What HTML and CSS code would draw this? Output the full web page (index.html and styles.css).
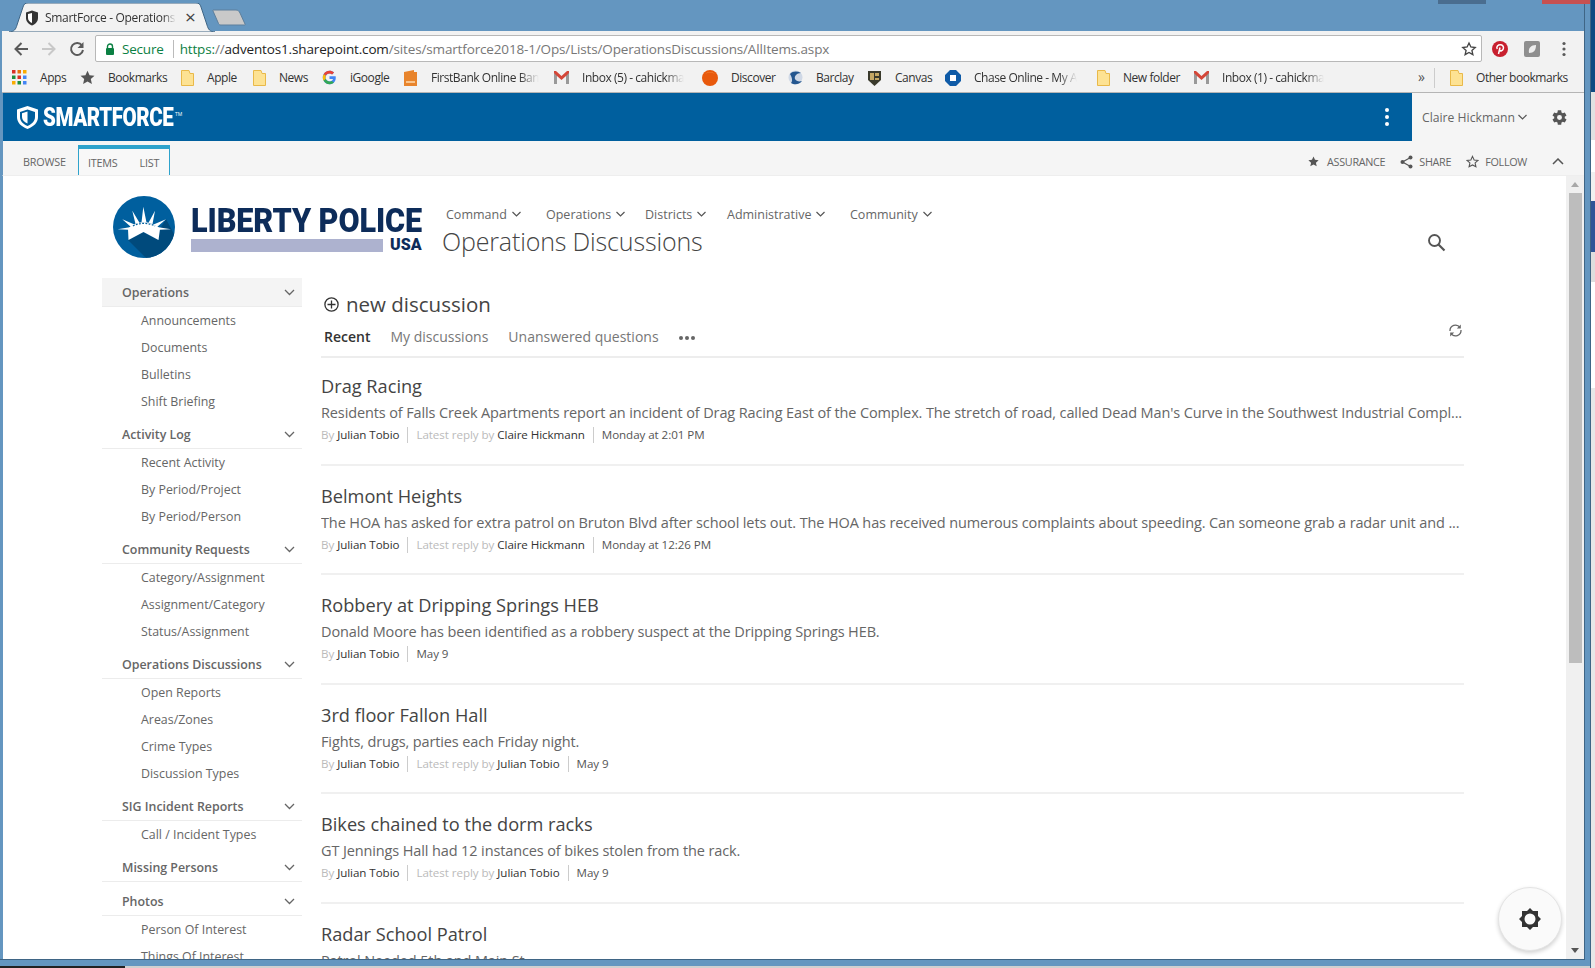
FILE: index.html
```html
<!DOCTYPE html>
<html lang="en">
<head>
<meta charset="utf-8">
<title>SmartForce - Operations Discussions</title>
<link rel="stylesheet" href="styles.css">
</head>
<body>
<div class="desktop">
  <div class="win-btn win-btn-min"></div>
  <div class="win-btn win-btn-close"></div>
  <div class="behind-right"></div>
  <div class="behind-bottom"></div>
  <div class="window">
    <div class="tabstrip">
      <div class="tab">
        <svg class="tab-shape" width="206" height="29" viewBox="0 0 206 29"><path d="M0 29C5 29 7 26 8 22L14 4C15 1 16 0 19 0H187C190 0 191 1 192 4L198 22C199 26 201 29 206 29Z" fill="#f2f2f2" stroke="#3f6585" stroke-width="1"/></svg>
        <svg class="tab-icon" width="14" height="16" viewBox="0 0 14 16"><path d="M7 .5 13 2.500V8c0 3.500-2.500 6-6 7.500C3.500 14 1 11.500 1 8V2.500Z" fill="#333"/><path d="M7 3v10C4.800 12 3 10.500 3 8V4Z" fill="#fff"/></svg>
        <span class="tab-title">SmartForce - Operations</span>
        <span class="tab-close">×</span>
      </div>
      <svg class="newtab" width="36" height="17" viewBox="0 0 36 17"><path d="M1 1H24C26 1 27 2 28 4L33 15C33.500 16 33 16 32 16H9C7.500 16 7 15.500 6.500 14.500L1 2C.7 1.300.8 1 1 1Z" fill="#c9c9c9" stroke="#5d7f9c"/></svg>
    </div>

    <div class="toolbar">
      <svg class="nav-ico" width="16" height="16" viewBox="0 0 16 16"><path d="M15 8H2.500M8.500 2 2.500 8l6 6" fill="none" stroke="#5a5a5a" stroke-width="2"/></svg>
      <svg class="nav-ico nav-fwd" width="16" height="16" viewBox="0 0 16 16"><path d="M1 8h12.500M7.500 2l6 6-6 6" fill="none" stroke="#c8c8c8" stroke-width="2"/></svg>
      <svg class="nav-ico nav-reload" width="16" height="16" viewBox="0 0 16 16"><path d="M13 4.500A6 6 0 1 0 14 9" fill="none" stroke="#5a5a5a" stroke-width="2"/><path d="M14.500 1v6h-6Z" fill="#5a5a5a"/></svg>
      <div class="omnibox">
        <svg width="10" height="12" viewBox="0 0 10 12"><path d="M2.500 5V3.500a2.500 2.500 0 0 1 5 0V5" fill="none" stroke="#0b8043" stroke-width="1.400"/><rect x="1" y="5" width="8" height="7" rx="1" fill="#0b8043"/></svg>
        <span class="secure">Secure</span>
        <span class="omni-sep"></span>
        <span class="url"><span class="url-https">https:</span>//<span class="url-host">adventos1.sharepoint.com</span>/sites/smartforce2018-1/Ops/Lists/OperationsDiscussions/AllItems.aspx</span>
        <svg class="omni-star" width="16" height="16" viewBox="0 0 24 24"><path d="M12 3l2.800 6 6.500.7-4.900 4.400 1.400 6.400L12 17.200 6.200 20.500l1.400-6.400L2.700 9.700 9.200 9Z" fill="none" stroke="#444" stroke-width="2"/></svg>
      </div>
      <svg class="ext-pin" width="16" height="16" viewBox="0 0 16 16"><circle cx="8" cy="8" r="8" fill="#c8202f"/><path d="M6.500 13 8 6.500M5.200 8C4 5.500 6 3.800 8.300 3.800s3.700 1.700 3 4c-.6 2-2.800 2.800-3.800 1.200" fill="none" stroke="#fff" stroke-width="1.500"/></svg>
      <svg class="ext-box" width="16" height="16" viewBox="0 0 16 16"><rect width="16" height="16" rx="2" fill="#8f8f8f"/><path d="M5 12C4 7 7 4 12 4c0 5-2 8-7 8Z" fill="#eee"/></svg>
      <svg class="ext-menu" width="4" height="16" viewBox="0 0 4 16"><circle cx="2" cy="2.500" r="1.600" fill="#5a5a5a"/><circle cx="2" cy="8" r="1.600" fill="#5a5a5a"/><circle cx="2" cy="13.500" r="1.600" fill="#5a5a5a"/></svg>
    </div>

    <div class="bookmarks">
      <div class="bm"><svg width="15" height="15" viewBox="0 0 15 15"><rect x="0" y="0" width="3.500" height="3.500" fill="#d93025"/><rect x="5.500" y="0" width="3.500" height="3.500" fill="#e8710a"/><rect x="11" y="0" width="3.500" height="3.500" fill="#f9ab00"/><rect x="0" y="5.500" width="3.500" height="3.500" fill="#1e8e3e"/><rect x="5.500" y="5.500" width="3.500" height="3.500" fill="#d93025"/><rect x="11" y="5.500" width="3.500" height="3.500" fill="#4285f4"/><rect x="0" y="11" width="3.500" height="3.500" fill="#f9ab00"/><rect x="5.500" y="11" width="3.500" height="3.500" fill="#1e8e3e"/><rect x="11" y="11" width="3.500" height="3.500" fill="#4285f4"/></svg><span>Apps</span></div>
      <div class="bm"><svg width="15" height="15" viewBox="0 0 24 24"><path d="M12 1l3.300 7.300 7.900.9-5.900 5.300 1.700 7.800L12 18.300 5 22.300l1.700-7.800L.8 9.200l7.900-.9Z" fill="#555"/></svg><span>Bookmarks</span></div>
      <div class="bm"><svg class="folder" width="13" height="16" viewBox="0 0 13 16"><path d="M.5.500H8l1 3h3.500v12H.5Z" fill="#fde293" stroke="#e9b949"/></svg><span>Apple</span></div>
      <div class="bm"><svg class="folder" width="13" height="16" viewBox="0 0 13 16"><path d="M.5.500H8l1 3h3.500v12H.5Z" fill="#fde293" stroke="#e9b949"/></svg><span>News</span></div>
      <div class="bm"><svg width="15" height="15" viewBox="0 0 48 48"><path d="M43.600 20H24v8.500h11.300C33.700 33.400 29.300 36.500 24 36.500 17.100 36.500 11.500 30.900 11.500 24S17.100 11.500 24 11.500c3.100 0 6 1.200 8.200 3l6.300-6.300C34.500 4.700 29.500 2.500 24 2.500 12.100 2.500 2.500 12.100 2.500 24S12.100 45.500 24 45.500c11.900 0 20-8.400 20-20 0-2-.1-3.700-.4-5.500Z" fill="#4285f4"/><path d="M5.300 13.500l7 5.100C14.100 14.400 18.700 11.500 24 11.500c3.100 0 6 1.200 8.200 3l6.300-6.300C34.500 4.700 29.500 2.500 24 2.500 15.800 2.500 8.800 7 5.300 13.500Z" fill="#ea4335"/><path d="M5.300 13.500C3.500 16.600 2.500 20.200 2.500 24c0 3.700 1 7.300 2.700 10.300l7-5.400c-.5-1.500-.7-3.100-.7-4.900 0-1.900.3-3.700.8-5.400Z" fill="#fbbc05"/><path d="M24 45.500c5.400 0 10.300-1.900 14-5.200l-6.800-5.300c-2 1.300-4.500 2-7.200 1.500-5.300 0-9.800-3.400-11.700-8.100l-7 5.400C8.700 40.800 15.800 45.500 24 45.500Z" fill="#34a853"/></svg><span>iGoogle</span></div>
      <div class="bm"><svg width="15" height="16" viewBox="0 0 15 16"><path d="M1 2 11 0v2h3v14H1Z" fill="#e8842c"/><rect x="3" y="11" width="9" height="2" fill="#f9c58d"/></svg><span class="fade">FirstBank Online Ban</span></div>
      <div class="bm"><svg width="15" height="13" viewBox="0 0 15 13"><path d="M0 13V0h2l5.500 5L13 0h2v13h-3V5L7.500 9 3 5v8Z" fill="#d44638"/><path d="M3 13V5L0 2v11ZM12 13V5l3-3v11Z" fill="#999"/></svg><span class="fade">Inbox (5) - cahickma</span></div>
      <div class="bm"><svg width="16" height="16" viewBox="0 0 16 16"><circle cx="8" cy="8" r="8" fill="#e8590c"/><path d="M3 4a7 7 0 0 1 10 0A9 9 0 0 0 3 4Z" fill="#f6a95c"/></svg><span>Discover</span></div>
      <div class="bm"><svg width="15" height="15" viewBox="0 0 15 15"><circle cx="7.500" cy="7.500" r="7" fill="#cfd8e6"/><path d="M2 4C5 1 9 1 13 3 9 3 6 6 7 9c1 2 4 3 7 2-3 4-8 4-11 2C5 11 4 7 2 4Z" fill="#23568f"/></svg><span>Barclay</span></div>
      <div class="bm"><svg width="15" height="16" viewBox="0 0 15 16"><path d="M1 1h13v9l-6.500 6L1 10Z" fill="#3a3a2c"/><path d="M3 3h4v7H3ZM8 3h4v3H8ZM8 8h4v2H8Z" fill="#c5a864"/></svg><span>Canvas</span></div>
      <div class="bm"><svg width="16" height="16" viewBox="0 0 16 16"><path d="M5 0h6l5 5H5ZM16 5v6l-5 5V5ZM11 16H5l-5-5h11ZM0 11V5l5-5v11Z" fill="#0f5ba7"/><rect x="5" y="5" width="6" height="6" fill="#fff"/></svg><span class="fade">Chase Online - My A</span></div>
      <div class="bm"><svg class="folder" width="13" height="16" viewBox="0 0 13 16"><path d="M.5.500H8l1 3h3.500v12H.5Z" fill="#fde293" stroke="#e9b949"/></svg><span>New folder</span></div>
      <div class="bm"><svg width="15" height="13" viewBox="0 0 15 13"><path d="M0 13V0h2l5.500 5L13 0h2v13h-3V5L7.500 9 3 5v8Z" fill="#d44638"/><path d="M3 13V5L0 2v11ZM12 13V5l3-3v11Z" fill="#999"/></svg><span class="fade">Inbox (1) - cahickma</span></div>
      <div class="bm-more">»</div>
      <div class="bm bm-other"><svg class="folder" width="13" height="16" viewBox="0 0 13 16"><path d="M.5.500H8l1 3h3.500v12H.5Z" fill="#fde293" stroke="#e9b949"/></svg><span>Other bookmarks</span></div>
    </div>

    <div class="page">
      <header class="sf-bar">
        <div class="sf-brand">
          <svg width="21" height="23" viewBox="0 0 21 23"><path fill-rule="evenodd" d="M10.500 0 21 3.500V11c0 5.500-4 9.500-10.500 12C4 20.500 0 16.500 0 11V3.500ZM10.500 3.500 3 6V11c0 4 2.800 7 7.500 9 4.700-2 7.500-5 7.500-9V6Z" fill="#fff"/><path d="M10.500 5.500V17.500C7 16 5 14 5 11V7.200Z" fill="#fff"/></svg>
          <span class="sf-name">SMARTFORCE</span><span class="sf-tm">TM</span>
        </div>
        <div class="sf-dots"><i></i><i></i><i></i></div>
        <div class="sf-user">
          <span>Claire Hickmann</span>
          <svg width="9" height="6" viewBox="0 0 9 6"><path d="M.5 1 4.500 5l4-4" fill="none" stroke="#555" stroke-width="1.200"/></svg>
          <svg class="sf-gear" width="17" height="17" viewBox="0 0 24 24"><path fill-rule="evenodd" d="M19.400 13a7.500 7.500 0 0 0 0-2l2.500-1.900-2.400-4.200-3 1.200a7.500 7.500 0 0 0-1.700-1L14.400 1.900H9.600L9.200 5.100a7.500 7.500 0 0 0-1.700 1l-3-1.200L2.100 9.100 4.600 11a7.500 7.500 0 0 0 0 2l-2.500 1.900 2.400 4.200 3-1.200a7.500 7.500 0 0 0 1.700 1l.4 3.200h4.800l.4-3.200a7.500 7.500 0 0 0 1.700-1l3 1.200 2.400-4.200ZM12 15.500a3.500 3.500 0 1 1 0-7 3.500 3.500 0 0 1 0 7Z" fill="#555"/></svg>
        </div>
      </header>

      <div class="ribbon">
        <span class="rib-tab rib-browse">BROWSE</span>
        <div class="rib-group"><span class="rib-tab">ITEMS</span><span class="rib-tab">LIST</span></div>
        <div class="rib-actions">
          <span class="rib-act rib-act-first"><svg width="11" height="11" viewBox="0 0 24 24"><path d="M12 1l3.300 7.300 7.900.9-5.900 5.300 1.700 7.800L12 18.300 5 22.300l1.700-7.800L.8 9.200l7.900-.9Z" fill="#555"/></svg>ASSURANCE</span>
          <span class="rib-act"><svg width="13" height="14" viewBox="0 0 13 14"><path d="M10.500 2.500 2.500 7l8 4.500" fill="none" stroke="#555" stroke-width="1.200"/><circle cx="10.500" cy="2.500" r="2" fill="#555"/><circle cx="2.500" cy="7" r="2" fill="#555"/><circle cx="10.500" cy="11.500" r="2" fill="#555"/></svg>SHARE</span>
          <span class="rib-act"><svg width="13" height="13" viewBox="0 0 24 24"><path d="M12 2.500l3 6.600 7.200.8-5.400 4.800 1.500 7.100L12 18.300 5.700 21.800l1.500-7.100L1.800 9.900 9 9.100Z" fill="none" stroke="#555" stroke-width="2"/></svg>FOLLOW</span>
          <svg class="rib-up" width="12" height="7" viewBox="0 0 12 7"><path d="M1 6 6 1l5 5" fill="none" stroke="#555" stroke-width="1.500"/></svg>
        </div>
      </div>

      <div class="viewport">
        <div class="content">
          <div class="site-head">
            <svg class="seal" width="62" height="62" viewBox="0 0 62 62">
              <defs><clipPath id="seal-clip"><circle cx="31" cy="31" r="31"/></clipPath></defs>
              <circle cx="31" cy="31" r="31" fill="#005f9e"/>
              <path clip-path="url(#seal-clip)" d="M15 44 33 62H62V40L53 23 47 33 45 44 30 36Z" fill="#004a7c"/>
              <path d="M28.500 26.500 30.300 10.700 33.500 26.500ZM22.500 28 19.300 14.700 26.500 26.800ZM18 31 9.300 23.300 21.500 28.500ZM15 33.800 4.700 33.300 18 31ZM35.500 26.800 42 14.700 39.500 28ZM40.500 28.500 53 23.300 44 31ZM44 31 58 33.300 47 33.800Z" fill="#fff"/>
              <path d="M15 33C22 24 40 24 47 33L45.500 44 30.500 36 15.500 44Z" fill="#fff"/>
              <path d="M20 30C26 26.500 36 26.500 42 30" fill="none" stroke="#005f9e" stroke-width="1.300" stroke-dasharray="1.800 1.400"/>
            </svg>
            <div class="wordmark">
              <div class="wm-name">LIBERTY POLICE</div>
              <div class="wm-sub"><span class="wm-bar"></span><span class="wm-usa">USA</span></div>
            </div>
            <div class="head-mid">
              <nav class="topnav">
                <span class="tn tn1">Command<svg width="9" height="6" viewBox="0 0 9 6"><path d="M.5 1 4.500 5l4-4" fill="none" stroke="#555" stroke-width="1.200"/></svg></span>
                <span class="tn tn2">Operations<svg width="9" height="6" viewBox="0 0 9 6"><path d="M.5 1 4.500 5l4-4" fill="none" stroke="#555" stroke-width="1.200"/></svg></span>
                <span class="tn tn3">Districts<svg width="9" height="6" viewBox="0 0 9 6"><path d="M.5 1 4.500 5l4-4" fill="none" stroke="#555" stroke-width="1.200"/></svg></span>
                <span class="tn tn4">Administrative<svg width="9" height="6" viewBox="0 0 9 6"><path d="M.5 1 4.500 5l4-4" fill="none" stroke="#555" stroke-width="1.200"/></svg></span>
                <span class="tn">Community<svg width="9" height="6" viewBox="0 0 9 6"><path d="M.5 1 4.500 5l4-4" fill="none" stroke="#555" stroke-width="1.200"/></svg></span>
              </nav>
              <h1 class="page-title">Operations Discussions</h1>
            </div>
            <svg class="search" width="19" height="19" viewBox="0 0 19 19"><circle cx="7.500" cy="7.500" r="5.500" fill="none" stroke="#555" stroke-width="1.900"/><path d="M11.500 11.500 17.500 17.500" stroke="#555" stroke-width="2.200"/></svg>
          </div>

          <div class="columns">
            <aside class="side">
              <div class="grp grp-first"><div class="grp-h">Operations<svg width="11" height="7" viewBox="0 0 11 7"><path d="M1 1l4.500 4.500L10 1" fill="none" stroke="#666" stroke-width="1.300"/></svg></div>
                <ul><li>Announcements</li><li>Documents</li><li>Bulletins</li><li>Shift Briefing</li></ul></div>
              <div class="grp"><div class="grp-h">Activity Log<svg width="11" height="7" viewBox="0 0 11 7"><path d="M1 1l4.500 4.500L10 1" fill="none" stroke="#666" stroke-width="1.300"/></svg></div>
                <ul><li>Recent Activity</li><li>By Period/Project</li><li>By Period/Person</li></ul></div>
              <div class="grp"><div class="grp-h">Community Requests<svg width="11" height="7" viewBox="0 0 11 7"><path d="M1 1l4.500 4.500L10 1" fill="none" stroke="#666" stroke-width="1.300"/></svg></div>
                <ul><li>Category/Assignment</li><li>Assignment/Category</li><li>Status/Assignment</li></ul></div>
              <div class="grp"><div class="grp-h">Operations Discussions<svg width="11" height="7" viewBox="0 0 11 7"><path d="M1 1l4.500 4.500L10 1" fill="none" stroke="#666" stroke-width="1.300"/></svg></div>
                <ul><li>Open Reports</li><li>Areas/Zones</li><li>Crime Types</li><li>Discussion Types</li></ul></div>
              <div class="grp"><div class="grp-h">SIG Incident Reports<svg width="11" height="7" viewBox="0 0 11 7"><path d="M1 1l4.500 4.500L10 1" fill="none" stroke="#666" stroke-width="1.300"/></svg></div>
                <ul><li>Call / Incident Types</li></ul></div>
              <div class="grp"><div class="grp-h">Missing Persons<svg width="11" height="7" viewBox="0 0 11 7"><path d="M1 1l4.500 4.500L10 1" fill="none" stroke="#666" stroke-width="1.300"/></svg></div></div>
              <div class="grp"><div class="grp-h">Photos<svg width="11" height="7" viewBox="0 0 11 7"><path d="M1 1l4.500 4.500L10 1" fill="none" stroke="#666" stroke-width="1.300"/></svg></div>
                <ul><li>Person Of Interest</li><li>Things Of Interest</li></ul></div>
            </aside>

            <main class="main">
              <div class="new-disc">
                <svg width="15" height="15" viewBox="0 0 15 15"><circle cx="7.500" cy="7.500" r="6.600" fill="none" stroke="#333" stroke-width="1.300"/><path d="M7.500 3.500v8M3.500 7.500h8" stroke="#333" stroke-width="1.300"/></svg>
                <span>new discussion</span>
              </div>
              <div class="views">
                <span class="view view-on">Recent</span>
                <span class="view">My discussions</span>
                <span class="view">Unanswered questions</span>
                <span class="view-more"><i></i><i></i><i></i></span>
                <svg class="sync" width="15" height="13" viewBox="0 0 15 13"><path d="M2 7A5.500 5.500 0 0 1 12 3.500M13 6A5.500 5.500 0 0 1 3 9.500" fill="none" stroke="#666" stroke-width="1.300"/><path d="M12.800 .5v4h-4ZM2.200 12.500v-4h4Z" fill="#666"/></svg>
              </div>

              <article class="post">
                <h2>Drag Racing</h2>
                <p class="desc">Residents of Falls Creek Apartments report an incident of Drag Racing East of the Complex. The stretch of road, called Dead Man's Curve in the Southwest Industrial Compl...</p>
                <div class="meta"><span class="m"><em>By</em> Julian Tobio</span><span class="m"><em>Latest reply by</em> Claire Hickmann</span><span class="m m-date">Monday at 2:01 PM</span></div>
              </article>
              <article class="post">
                <h2>Belmont Heights</h2>
                <p class="desc">The HOA has asked for extra patrol on Bruton Blvd after school lets out. The HOA has received numerous complaints about speeding. Can someone grab a radar unit and ...</p>
                <div class="meta"><span class="m"><em>By</em> Julian Tobio</span><span class="m"><em>Latest reply by</em> Claire Hickmann</span><span class="m m-date">Monday at 12:26 PM</span></div>
              </article>
              <article class="post">
                <h2>Robbery at Dripping Springs HEB</h2>
                <p class="desc">Donald Moore has been identified as a robbery suspect at the Dripping Springs HEB.</p>
                <div class="meta"><span class="m"><em>By</em> Julian Tobio</span><span class="m m-date">May 9</span></div>
              </article>
              <article class="post">
                <h2>3rd floor Fallon Hall</h2>
                <p class="desc">Fights, drugs, parties each Friday night.</p>
                <div class="meta"><span class="m"><em>By</em> Julian Tobio</span><span class="m"><em>Latest reply by</em> Julian Tobio</span><span class="m m-date">May 9</span></div>
              </article>
              <article class="post">
                <h2>Bikes chained to the dorm racks</h2>
                <p class="desc">GT Jennings Hall had 12 instances of bikes stolen from the rack.</p>
                <div class="meta"><span class="m"><em>By</em> Julian Tobio</span><span class="m"><em>Latest reply by</em> Julian Tobio</span><span class="m m-date">May 9</span></div>
              </article>
              <article class="post">
                <h2>Radar School Patrol</h2>
                <p class="desc">Patrol Needed 5th and Main St.</p>
              </article>
            </main>
          </div>
        </div>
        <div class="scrollbar">
          <span class="sb-up"></span>
          <span class="sb-thumb"></span>
          <span class="sb-down"></span>
        </div>
        <button class="fab" type="button" aria-label="Settings">
          <svg width="22" height="22" viewBox="0 0 22 22"><path fill-rule="evenodd" d="M11 0l3 3h5v5l3 3-3 3v5h-5l-3 3-3-3H3v-5l-3-3 3-3V3h5ZM11 5.500a5.500 5.500 0 1 0 0 11 5.500 5.500 0 0 0 0-11Z" fill="#333"/></svg>
        </button>
      </div>
    </div>
  </div>
</div>
</body>
</html>
```

FILE: styles.css
```css
* { box-sizing: border-box; }
html, body { margin: 0; height: 100%; overflow: hidden; }
body { font-family: "Open Sans", "Liberation Sans", sans-serif; color: #555; }
svg { flex: none; display: block; }
ul { list-style: none; margin: 0; padding: 0; }

.desktop { position: relative; width: 1595px; height: 968px; background: #6496c0; }
.win-btn { position: absolute; top: 0; height: 4px; }
.win-btn-min { left: 1438px; width: 48px; background: #4a6d8f; }
.win-btn-close { left: 1542px; width: 48px; background: #c75050; }
.behind-right { position: absolute; left: 1590px; top: 0; bottom: 0; width: 5px; border-left: 1px solid #3f6585; background: linear-gradient(#0f4a82 0 92px, #e2e2e2 92px 140px, #fff 140px 172px, #f0f0f0 172px 201px, #2f5597 201px 252px, #dedede 252px 282px, #fff 282px 388px, #e8e8e8 388px); }
.behind-bottom { position: absolute; left: 0; right: 5px; top: 966px; height: 2px; background: linear-gradient(90deg, #222 0 125px, #d0d0d0 125px); }

.window { width: 1585px; height: 960px; display: flex; flex-direction: column; border-right: 1px solid #3f6585; border-bottom: 1px solid #3f6585; }

.tabstrip { height: 31px; position: relative; display: flex; flex: none; }
.tab { position: relative; margin: 3px 0 0 9px; width: 206px; height: 29px; display: flex; align-items: center; font-size: 12px; color: #333; padding: 0 0 0 16px; z-index: 1; }
.tab-shape { position: absolute; left: 0; top: 0; }
.tab-icon, .tab-title, .tab-close { position: relative; }
.tab-title { margin-left: 6px; width: 131px; white-space: nowrap; letter-spacing: -.3px; -webkit-mask-image: linear-gradient(90deg, #000 90%, transparent); mask-image: linear-gradient(90deg, #000 90%, transparent); }
.tab-close { font-size: 19px; line-height: 1; margin-left: 9px; color: #444; }
.newtab { margin: 9px 0 0 -3px; }

.toolbar { height: 34px; flex: none; margin-left: 2px; padding-top: 1px; background: #f2f2f2; display: flex; align-items: center; padding-left: 11px; }
.nav-fwd { margin-left: 12px; }
.nav-reload { margin-left: 12px; }
.omnibox { margin-left: 10px; width: 1387px; height: 27px; background: #fff; border: 1px solid #b8b8b8; border-radius: 2px; display: flex; align-items: center; padding-left: 9px; font-size: 13.500px; white-space: nowrap; }
.secure { color: #0b8043; margin-left: 7px; letter-spacing: -.2px; }
.omni-sep { width: 1px; height: 18px; background: #bbb; margin: 0 6px 0 9px; }
.url { color: #777; letter-spacing: -.15px; }
.url-https { color: #0b8043; }
.url-host { color: #222; }
.omni-star { margin-left: auto; margin-right: 4px; }
.ext-pin { margin-left: 10px; }
.ext-box { margin-left: 16px; }
.ext-menu { margin-left: 22px; }

.bookmarks { height: 28px; flex: none; margin-left: 2px; padding-bottom: 2px; background: #f2f2f2; border-bottom: 1px solid #b5b5b5; display: grid; grid-template-columns: 10px 68px 101px 72px 69px 81px 151px 148px 86px 79px 78px 152px 97px 224px 17px auto; align-items: center; font-size: 12px; color: #333; }
.bm { display: flex; align-items: center; gap: 13px; white-space: nowrap; }
.bm:first-child { grid-column: 2; }
.bm span { letter-spacing: -.45px; }
.bm .fade { -webkit-mask-image: linear-gradient(90deg, #000 82%, transparent); mask-image: linear-gradient(90deg, #000 82%, transparent); }
.bm-more { font-size: 14px; color: #555; border-right: 1px solid #ccc; height: 20px; line-height: 18px; }
.bm-other { margin-left: 15px; }

.page { flex: 1; min-height: 0; margin-left: 2px; display: flex; flex-direction: column; background: #fff; }
.sf-bar { height: 48px; flex: none; background: #005f9e; display: flex; align-items: center; padding-left: 14px; border-left: 1px solid #6496c0; }
.sf-brand { display: flex; align-items: center; color: #fff; }
.sf-name { display: inline-block; font-family: Roboto, "Open Sans", sans-serif; font-weight: 900; font-size: 25px; letter-spacing: -.5px; margin-left: 5px; transform: scaleX(.82); transform-origin: 0 50%; margin-right: -29px; }
.sf-tm { font-size: 5px; align-self: flex-start; margin-top: 8px; margin-left: 2px; }
.sf-dots { margin-left: auto; display: flex; flex-direction: column; gap: 3px; margin-right: 23px; }
.sf-dots i { display: block; width: 4px; height: 4px; border-radius: 50%; background: #fff; }
.sf-user { width: 172px; height: 48px; background: #f5f5f5; display: flex; align-items: center; gap: 3px; padding-left: 10px; font-size: 12.200px; color: #666; white-space: nowrap; }
.sf-gear { margin-left: 21px; }

.ribbon { height: 35px; flex: none; background: #f5f5f5; border-bottom: 1px solid #eee; border-left: 1px solid #6496c0; display: flex; align-items: flex-end; font-size: 10.800px; color: #666; }
.rib-tab { display: inline-block; line-height: 27px; letter-spacing: -.2px; }
.rib-browse { margin-left: 20px; width: 55px; }
.rib-group { height: 30px; width: 92px; background: #f8f8f8; border: 1px solid #2ea3cc; border-top-width: 4px; border-bottom: 0; display: flex; gap: 22px; padding-left: 9px; }
.rib-actions { margin-left: auto; height: 100%; display: flex; align-items: center; padding-right: 20px; padding-top: 7px; }
.rib-act { display: flex; align-items: center; gap: 6px; margin-left: 15px; letter-spacing: -.3px; }
.rib-act-first { gap: 8px; }
.rib-up { margin-left: 25px; }

.viewport { flex: 1; min-height: 0; display: flex; position: relative; border-left: 1px solid #6496c0; }
.content { flex: 1; min-width: 0; overflow: hidden; padding-left: 99px; }
.site-head { height: 102px; position: relative; display: flex; align-items: flex-start; padding: 20px 0 0 11px; }
.seal { flex: none; }
.wordmark { margin: 11px 0 0 16px; width: 236px; color: #0d2c5a; }
.wm-name { font-family: Roboto, sans-serif; font-weight: 900; font-size: 34px; line-height: 26px; letter-spacing: -.1px; white-space: nowrap; transform: scaleX(.9); transform-origin: 0 50%; }
.wm-sub { display: flex; align-items: center; margin-top: 2px; height: 20px; }
.wm-bar { width: 192px; height: 13px; background: #adb2cf; }
.wm-usa { font-family: Roboto, sans-serif; font-weight: 900; font-size: 16px; line-height: 16px; margin-left: 7px; }
.head-mid { margin-left: 17px; }
.topnav { display: flex; font-size: 12.500px; color: #666; height: 20px; align-items: center; padding-left: 2px; margin-top: 8px; }
.tn { display: flex; align-items: center; gap: 5px; white-space: nowrap; }
.tn1 { width: 100px; } .tn2 { width: 99px; } .tn3 { width: 82px; } .tn4 { width: 123px; }
.page-title { margin: -1px 0 0 -2px; font-weight: 300; font-size: 25px; line-height: 36px; color: #444; letter-spacing: -.15px; white-space: nowrap; }
.search { position: absolute; left: 1325px; top: 57px; }

.columns { display: flex; gap: 19px; align-items: flex-start; }
.side { width: 200px; flex: none; }
.grp { margin-bottom: 5px; }
.grp-h { height: 29px; display: flex; align-items: center; justify-content: space-between; padding: 0 7px 0 20px; border-bottom: 1px solid #ececec; font-size: 12.400px; font-weight: 600; color: #666; white-space: nowrap; }
.grp-first .grp-h { background: #f4f4f4; }
.grp ul { margin-bottom: 1px; }
.grp li { height: 27px; line-height: 27px; padding-left: 39px; font-size: 12.400px; color: #666; white-space: nowrap; }

.main { width: 1143px; flex: none; position: relative; }
.new-disc { height: 30px; margin-top: 11px; display: flex; align-items: center; gap: 7px; padding-left: 3px; font-size: 20.500px; color: #444; }
.views { height: 33px; margin-top: 6px; border-bottom: 2px solid #ededed; display: flex; align-items: flex-start; padding-left: 3px; font-size: 14px; color: #777; position: relative; }
.view { margin-right: 20px; line-height: 24px; white-space: nowrap; }
.view-on { font-weight: 600; color: #333; }
.view-more { display: flex; gap: 2px; margin-top: 11px; }
.view-more i { display: block; width: 4px; height: 4px; border-radius: 50%; background: #666; }
.sync { position: absolute; right: 1px; top: -1px; }

.post { height: 109.500px; padding-top: 17px; border-bottom: 2px solid #f0f0f0; overflow: hidden; }
.views + .post { height: 107.600px; padding-top: 15px; }
.post h2 { margin: 0; font-weight: 400; font-size: 18.200px; line-height: 26px; color: #444; }
.desc { margin: 2px 0 0; font-size: 14.500px; line-height: 24px; color: #666; white-space: nowrap; letter-spacing: -.12px; }
.meta { display: flex; font-size: 11.600px; color: #333; line-height: 16px; margin-top: 2px; }
.m { padding-right: 8px; margin-right: 8px; border-right: 1px solid #ccc; letter-spacing: -.06px; }
.m em { font-style: normal; color: #bbb; }
.m-date { border: 0; color: #555; }

.scrollbar { width: 18px; flex: none; background: #f0f0f0; display: flex; flex-direction: column; align-items: center; }
.sb-up { margin-top: 6px; border: 4px solid transparent; border-top: 0; border-bottom: 5px solid #a8a8a8; }
.sb-thumb { width: 13px; height: 470px; background: #bdbdbd; margin-top: 6px; }
.sb-down { margin-top: auto; margin-bottom: 6px; border: 4px solid transparent; border-bottom: 0; border-top: 5px solid #555; }
.fab { position: absolute; right: 22px; bottom: 8px; width: 64px; height: 64px; border-radius: 50%; border: 1px solid #e4e4e4; background: #fafafa; box-shadow: 0 2px 4px rgba(0,0,0,.18); display: flex; align-items: center; justify-content: center; padding: 0; }
```
